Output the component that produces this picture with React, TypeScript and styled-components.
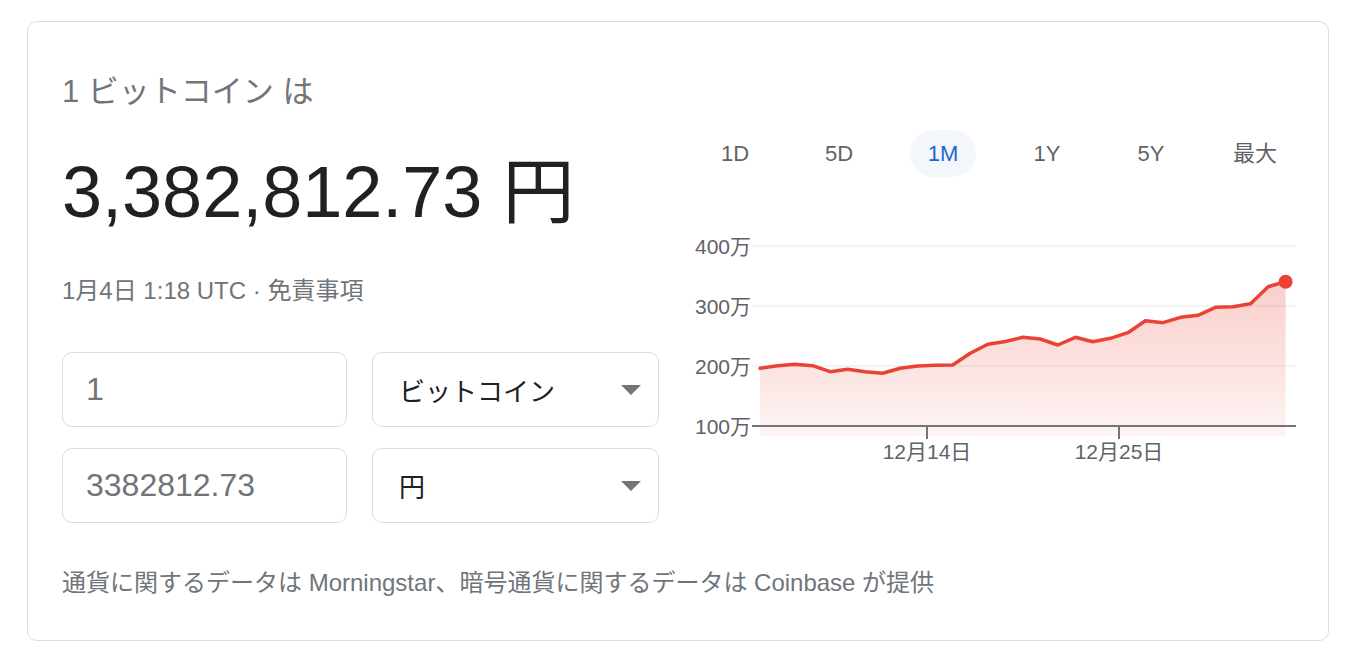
import React from "react";
import styled, { createGlobalStyle } from "styled-components";

const GlobalStyle = createGlobalStyle`
  html, body { margin: 0; padding: 0; background: #ffffff; }
  body { font-family: "Liberation Sans", "Noto Sans CJK JP", Arial, sans-serif; }
  * { box-sizing: border-box; }
`;

const Page = styled.div`
  padding: 21px 31px 0 27px;
`;

const Card = styled.section`
  width: 1302px;
  height: 620px;
  border: 1px solid #dadce0;
  border-radius: 10px;
  padding: 52px 21px 0 34px;
  display: flex;
  flex-direction: column;
`;

const Columns = styled.div`
  display: grid;
  grid-template-columns: 597px 624px;
  column-gap: 24px;
  align-items: start;
`;

const LeftCol = styled.div`
  display: flex;
  flex-direction: column;
`;

const Title = styled.div`
  font-size: 31px;
  line-height: 36px;
  color: #70757a;
`;

const BigValue = styled.div`
  margin-top: 42px;
  font-size: 72px;
  line-height: 80px;
  color: #202124;
  white-space: nowrap;
`;

const Meta = styled.div`
  margin-top: 44px;
  font-size: 24px;
  line-height: 30px;
  color: #70757a;
`;

const Converter = styled.div`
  margin-top: 46px;
  display: grid;
  grid-template-columns: 285px 287px;
  column-gap: 25px;
  row-gap: 21px;
`;

const Field = styled.div`
  height: 75px;
  border: 1px solid #dadce0;
  border-radius: 10px;
  display: flex;
  align-items: center;
`;

const AmountInput = styled.input`
  width: 100%;
  height: 100%;
  border: none;
  outline: none;
  background: transparent;
  padding: 0 0 0 23px;
  font-family: "Liberation Sans", "Noto Sans CJK JP", Arial, sans-serif;
  font-size: 32px;
  color: #70757a;
`;

const SelectBox = styled(Field)`
  padding: 0 17px 0 26px;
  justify-content: space-between;
  font-size: 26px;
  color: #202124;
  cursor: pointer;
`;

const Caret = styled.span`
  width: 0;
  height: 0;
  border-left: 10px solid transparent;
  border-right: 10px solid transparent;
  border-top: 10px solid #70757a;
`;

const RightCol = styled.div`
  display: flex;
  flex-direction: column;
  padding-top: 56px;
`;

const Tabs = styled.div`
  display: flex;
`;

const TabSlot = styled.div`
  flex: 1 1 0;
  display: flex;
  justify-content: center;
`;

const TabLabel = styled.span<{ $active?: boolean }>`
  height: 47px;
  padding: 0 18px;
  border-radius: 24px;
  display: flex;
  align-items: center;
  font-size: 22px;
  line-height: 1;
  color: ${(p) => (p.$active ? "#1967d2" : "#5f6368")};
  background: ${(p) => (p.$active ? "#f3f6fa" : "transparent")};
  cursor: pointer;
`;

const ChartWrap = styled.div`
  margin-top: 48px;
  height: 245px;
`;

const Footer = styled.div`
  margin-top: 45px;
  font-size: 24px;
  line-height: 30px;
  color: #70757a;
  white-space: nowrap;
`;

const ys = [
  368.3, 365.7, 364.3, 365.7, 371.7, 369.3, 371.7, 373.3, 368.3, 366, 365.3,
  365, 353.3, 344.3, 341.5, 337.3, 339, 345, 337.3, 341.7, 338.3, 332.7, 320.7,
  322.7, 317.3, 315.3, 307.3, 306.7, 303.7, 286.7, 281.7,
];

const OX = 683;
const OY = 225;

function Chart() {
  const pts = ys.map((y, i) => [760 + i * 17.52 - OX, y - OY] as const);
  const line = pts.map((p, i) => `${i ? "L" : "M"}${p[0].toFixed(1)},${p[1].toFixed(1)}`).join(" ");
  const last = pts[pts.length - 1];
  const area = `${line} L${last[0].toFixed(1)},211 L${pts[0][0].toFixed(1)},211 Z`;
  const labelStyle = {
    fontFamily: '"Liberation Sans", "Noto Sans CJK JP", Arial, sans-serif',
    fontSize: 21,
    fill: "#5f6368",
  };
  const grid = [
    { y: 21, t: "400万" },
    { y: 81, t: "300万" },
    { y: 141, t: "200万" },
  ];
  return (
    <svg width="624" height="245" viewBox="0 0 624 245">
      <defs>
        <linearGradient id="areaFill" x1="0" y1="56" x2="0" y2="211" gradientUnits="userSpaceOnUse">
          <stop offset="0" stopColor="#ea4335" stopOpacity="0.26" />
          <stop offset="1" stopColor="#ea4335" stopOpacity="0.06" />
        </linearGradient>
      </defs>
      {grid.map((g) => (
        <line key={g.t} x1="69" x2="613" y1={g.y} y2={g.y} stroke="#f1f3f4" strokeWidth="2" />
      ))}
      <path d={area} fill="url(#areaFill)" />
      <line x1="69" x2="613" y1="201" y2="201" stroke="#70757a" strokeWidth="2" />
      <line x1="244" x2="244" y1="201" y2="214" stroke="#70757a" strokeWidth="2" />
      <line x1="436" x2="436" y1="201" y2="214" stroke="#70757a" strokeWidth="2" />
      <path d={line} fill="none" stroke="#ea4335" strokeWidth="3.5" strokeLinejoin="round" strokeLinecap="round" />
      <circle cx={last[0]} cy={last[1]} r="7" fill="#ea4335" />
      {[...grid, { y: 201, t: "100万" }].map((g) => (
        <text key={g.t} x="68" y={g.y} textAnchor="end" dominantBaseline="central" style={labelStyle}>
          {g.t}
        </text>
      ))}
      <text x="244" y="226" textAnchor="middle" dominantBaseline="central" style={labelStyle}>
        12月14日
      </text>
      <text x="436" y="226" textAnchor="middle" dominantBaseline="central" style={labelStyle}>
        12月25日
      </text>
    </svg>
  );
}

const tabs = ["1D", "5D", "1M", "1Y", "5Y", "最大"];

export default function App() {
  return (
    <>
      <GlobalStyle />
      <Page>
        <Card>
          <Columns>
            <LeftCol>
              <Title>1 ビットコイン は</Title>
              <BigValue>3,382,812.73 円</BigValue>
              <Meta>1月4日 1:18 UTC · 免責事項</Meta>
              <Converter>
                <Field>
                  <AmountInput readOnly value="1" />
                </Field>
                <SelectBox>
                  <span>ビットコイン</span>
                  <Caret />
                </SelectBox>
                <Field>
                  <AmountInput readOnly value="3382812.73" />
                </Field>
                <SelectBox>
                  <span>円</span>
                  <Caret />
                </SelectBox>
              </Converter>
            </LeftCol>
            <RightCol>
              <Tabs>
                {tabs.map((t) => (
                  <TabSlot key={t}>
                    <TabLabel $active={t === "1M"}>{t}</TabLabel>
                  </TabSlot>
                ))}
              </Tabs>
              <ChartWrap>
                <Chart />
              </ChartWrap>
            </RightCol>
          </Columns>
          <Footer>通貨に関するデータは Morningstar、暗号通貨に関するデータは Coinbase が提供</Footer>
        </Card>
      </Page>
    </>
  );
}
